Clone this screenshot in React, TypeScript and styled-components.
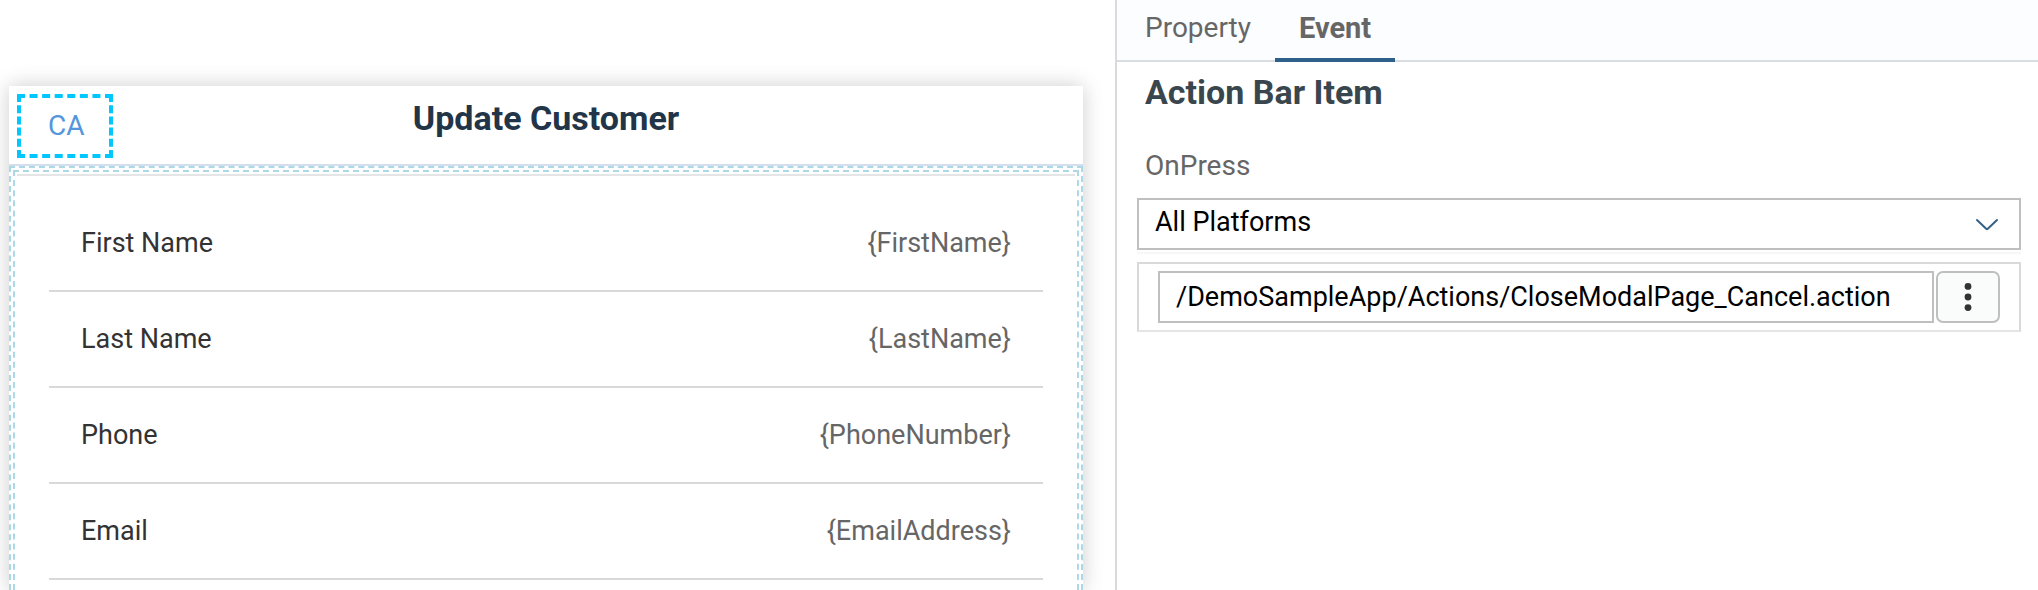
import React, { useState } from "react";
import styled, { createGlobalStyle } from "styled-components";

const GlobalStyle = createGlobalStyle`
  *, *::before, *::after { box-sizing: border-box; }
  body { margin: 0; background: #fff; }
  body, button, input, select {
    font-family: Roboto, "Liberation Sans", sans-serif;
    font-size: 28px;
    line-height: 32px;
  }
  h1, h2 { margin: 0; font-size: 34px; line-height: 40px; font-weight: 700; }
`;

const Workspace = styled.div`
  display: flex;
  min-height: 100vh;
`;

const Canvas = styled.main`
  flex: 1;
  min-width: 0;
  display: flex;
  padding: 86px 32px 0 9px;
`;

const Page = styled.section`
  flex: 1;
  min-width: 0;
  display: flex;
  flex-direction: column;
  background: #fff;
  box-shadow: 0 0 20px rgba(0, 0, 0, 0.2);
`;

const ActionBar = styled.header`
  display: grid;
  grid-template-columns: 1fr auto 1fr;
  align-items: start;
  height: 80px;
  padding: 8px 8px 0;
  border-bottom: 2px solid #d3dfed;
`;

const ActionBarItem = styled.button`
  width: 96px;
  height: 64px;
  padding: 0 0 0 27px;
  border: 4px dashed #00c8ff;
  background: none;
  color: #5496db;
  text-align: left;
`;

const PageTitle = styled.h1`
  padding-top: 4px;
  color: #223548;
`;

const Selection = styled.div`
  flex: 1;
  display: flex;
  flex-direction: column;
  padding: 2px 2px 0;
  border: 2px dashed #add8e6;
  border-bottom: 0;
`;

const Form = styled.form`
  flex: 1;
  padding: 20px 32px 0;
  border-top: 2px solid #e5e5e5;
`;

const FormRow = styled.div`
  display: flex;
  align-items: center;
  height: 96px;
  padding: 0 32px;
  border-bottom: 2px solid #d9d9d9;
`;

const RowLabel = styled.label`
  flex: none;
  color: #333;
  font-size: 27px;
`;

const RowValue = styled.input`
  flex: 1;
  min-width: 0;
  padding: 0;
  border: 0;
  background: none;
  color: #666;
  font-size: 27px;
  text-align: right;
`;

const Inspector = styled.aside`
  flex: 0 0 923px;
  border-left: 2px solid #d9d9de;
`;

const Tabs = styled.div`
  display: flex;
  height: 62px;
  padding-left: 4px;
  background: #fcfdff;
  box-shadow: inset 0 -2px #d9dce0;
`;

const Tab = styled.button<{ $active: boolean }>`
  padding: 0 24px 2px;
  border: 0;
  border-bottom: 4px solid ${(p) => (p.$active ? "#2f5f8b" : "transparent")};
  background: none;
  color: #666;
  font-size: ${(p) => (p.$active ? 29 : 28)}px;
  font-weight: ${(p) => (p.$active ? 700 : 400)};
`;

const InspectorBody = styled.div`
  padding: 10px 17px 0 20px;
`;

const InspectorTitle = styled.h2`
  padding-left: 8px;
  color: #39464d;
`;

const FieldLabel = styled.label`
  display: block;
  padding: 38px 8px 16px;
  color: #666;
`;

const SelectBox = styled.div`
  position: relative;
  border-bottom: 2px solid #f7f7f7;
  padding-bottom: 2px;
`;

const PlatformSelect = styled.select`
  display: block;
  width: 100%;
  height: 52px;
  padding: 0 64px 4px 16px;
  appearance: none;
  border: 2px solid #bfbfbf;
  border-radius: 0;
  background: #fff;
  color: #000;
  font-size: 27px;
`;

const Chevron = styled.svg`
  position: absolute;
  top: 18px;
  right: 22px;
  pointer-events: none;
`;

const ActionRow = styled.div`
  display: flex;
  gap: 2px;
  margin-top: 8px;
  padding: 7px 19px;
  border: 2px solid #d9d9d9;
  border-bottom-color: #e5e5e5;
`;

const ActionPath = styled.input`
  flex: 1;
  min-width: 0;
  height: 52px;
  padding: 0 16px;
  border: 2px solid #bfbfbf;
  color: #000;
  font-size: 27px;
`;

const MenuButton = styled.button`
  display: flex;
  align-items: center;
  justify-content: center;
  width: 64px;
  height: 52px;
  padding: 0;
  border: 2px solid #bfbfbf;
  border-radius: 7px;
  background: #fafcfc;
`;

const fields = [
  { id: "firstName", label: "First Name", value: "{FirstName}" },
  { id: "lastName", label: "Last Name", value: "{LastName}" },
  { id: "phone", label: "Phone", value: "{PhoneNumber}" },
  { id: "email", label: "Email", value: "{EmailAddress}" },
];

const tabs = ["Property", "Event"];

export default function App() {
  const [active, setActive] = useState("Event");
  return (
    <>
      <GlobalStyle />
      <Workspace>
        <Canvas>
          <Page>
            <ActionBar>
              <ActionBarItem type="button">CA</ActionBarItem>
              <PageTitle>Update Customer</PageTitle>
            </ActionBar>
            <Selection>
              <Selection>
                <Form>
                  {fields.map((f) => (
                    <FormRow key={f.id}>
                      <RowLabel htmlFor={f.id}>{f.label}</RowLabel>
                      <RowValue id={f.id} type="text" defaultValue={f.value} />
                    </FormRow>
                  ))}
                </Form>
              </Selection>
            </Selection>
          </Page>
        </Canvas>
        <Inspector>
          <Tabs role="tablist">
            {tabs.map((t) => (
              <Tab
                key={t}
                type="button"
                role="tab"
                aria-selected={t === active}
                $active={t === active}
                onClick={() => setActive(t)}
              >
                {t}
              </Tab>
            ))}
          </Tabs>
          <InspectorBody>
            <InspectorTitle>Action Bar Item</InspectorTitle>
            <FieldLabel htmlFor="platform">OnPress</FieldLabel>
            <SelectBox>
              <PlatformSelect id="platform">
                <option>All Platforms</option>
              </PlatformSelect>
              <Chevron width="24" height="18" viewBox="0 0 24 18" fill="none" aria-hidden="true">
                <path
                  d="M2 4l9.2 8.8a1.2 1.2 0 0 0 1.6 0L22 4"
                  stroke="#346187"
                  strokeWidth="2"
                  strokeLinecap="round"
                />
              </Chevron>
            </SelectBox>
            <ActionRow>
              <ActionPath
                type="text"
                aria-label="OnPress action"
                defaultValue="/DemoSampleApp/Actions/CloseModalPage_Cancel.action"
              />
              <MenuButton type="button" aria-label="Action options">
                <svg width="8" height="28" viewBox="0 0 8 28" fill="#333" aria-hidden="true">
                  <circle cx="4" cy="3.4" r="3.4" />
                  <circle cx="4" cy="14" r="3.4" />
                  <circle cx="4" cy="24.6" r="3.4" />
                </svg>
              </MenuButton>
            </ActionRow>
          </InspectorBody>
        </Inspector>
      </Workspace>
    </>
  );
}
